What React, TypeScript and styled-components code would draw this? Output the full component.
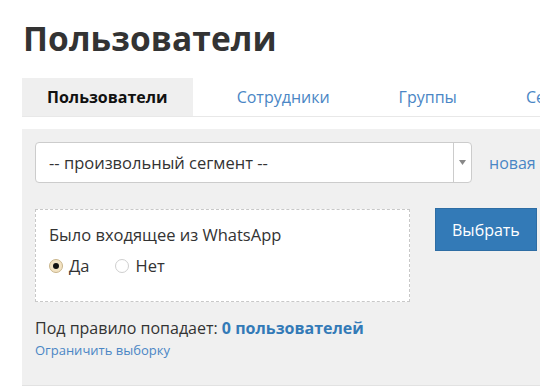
import React from 'react';
import styled, { createGlobalStyle } from 'styled-components';

const GlobalStyle = createGlobalStyle`
  html, body {
    margin: 0;
    padding: 0;
    background: #ffffff;
    overflow: hidden;
  }
  body {
    font-family: "Open Sans", "Liberation Sans", sans-serif;
    color: #333333;
  }
`;

const Page = styled.div`
  width: 720px;
  padding: 14px 0 0 22px;
`;

const Title = styled.h1`
  margin: 0 0 16px 1px;
  font-family: "Open Sans", sans-serif;
  font-size: 33.5px;
  line-height: 48px;
  font-weight: 700;
  color: #333333;
  letter-spacing: 0.1px;
`;

const Tabs = styled.div`
  display: flex;
  gap: 19px;
  height: 38px;
  border-bottom: 1px solid #e8e8e8;
`;

const Tab = styled.div<{ $active?: boolean }>`
  display: flex;
  align-items: center;
  padding: 0 25px;
  font-size: 16px;
  font-weight: ${({ $active }) => ($active ? 700 : 400)};
  color: ${({ $active }) => ($active ? '#111111' : '#4a86c5')};
  background: ${({ $active }) => ($active ? '#efefef' : 'transparent')};
  white-space: nowrap;
`;

const Panel = styled.div`
  margin-top: 12px;
  background: #f0f0f0;
  border-bottom: 1px solid #e2e2e2;
  padding: 13px 13px 27px 13px;
`;

const SelectRow = styled.div`
  display: flex;
  align-items: center;
  gap: 17px;
`;

const SelectBox = styled.div`
  display: flex;
  width: 437px;
  height: 41px;
  box-sizing: border-box;
  background: #ffffff;
  border: 1px solid #cccccc;
  border-radius: 4px;
`;

const SelectValue = styled.div`
  flex: 1;
  display: flex;
  align-items: center;
  padding-left: 13px;
  font-size: 16.5px;
  color: #333333;
`;

const SelectArrow = styled.div`
  width: 16px;
  display: flex;
  align-items: center;
  justify-content: center;
  border-left: 1px solid #cccccc;
  padding-right: 1px;
`;

const Link = styled.a<{ $size?: number }>`
  color: #4a86c5;
  font-size: ${({ $size }) => $size ?? 16}px;
  text-decoration: none;
  white-space: nowrap;
`;

const RuleRow = styled.div`
  display: flex;
  align-items: flex-start;
  gap: 25px;
  margin-top: 26px;
`;

const RuleBox = styled.div`
  width: 375px;
  height: 93px;
  box-sizing: border-box;
  background: #ffffff;
  border: 1px dashed #c8c8c8;
  padding: 13px 13px;
`;

const RuleLabel = styled.div`
  font-size: 16.5px;
  line-height: 24px;
  color: #333333;
`;

const Radios = styled.div`
  display: flex;
  gap: 26px;
  margin-top: 7px;
`;

const RadioOption = styled.label`
  display: flex;
  align-items: center;
  gap: 6px;
  font-size: 16.5px;
  color: #333333;
`;

const RadioCircle = styled.span<{ $checked?: boolean }>`
  width: 14px;
  height: 14px;
  box-sizing: border-box;
  border-radius: 50%;
  border: 1px solid ${({ $checked }) => ($checked ? '#c9b58c' : '#cfcfcf')};
  background: ${({ $checked }) => ($checked ? '#f3e3c3' : '#ffffff')};
  display: flex;
  align-items: center;
  justify-content: center;
  &::after {
    content: '';
    width: 6px;
    height: 6px;
    border-radius: 50%;
    background: ${({ $checked }) => ($checked ? '#111111' : 'transparent')};
  }
`;

const Buttons = styled.div`
  display: flex;
  gap: 4px;
  margin-top: -1px;
`;

const Button = styled.button<{ $variant: 'primary' | 'success' }>`
  height: 43px;
  padding: 0 16px;
  font-family: inherit;
  font-size: 16px;
  color: #ffffff;
  border-radius: 0;
  border: 1px solid ${({ $variant }) => ($variant === 'primary' ? '#2e6da4' : '#4cae4c')};
  background: ${({ $variant }) => ($variant === 'primary' ? '#337ab7' : '#5cb85c')};
  white-space: nowrap;
`;

const Summary = styled.div`
  margin-top: 15px;
  font-size: 16px;
  line-height: 22px;
  color: #333333;
`;

const Count = styled.span`
  font-weight: 700;
  color: #337ab7;
`;

const SubLink = styled.div`
  margin-top: 2px;
  line-height: 16px;
`;

export default function App() {
  return (
    <>
      <GlobalStyle />
      <Page>
        <Title>Пользователи</Title>
        <Tabs>
          <Tab $active>Пользователи</Tab>
          <Tab>Сотрудники</Tab>
          <Tab>Группы</Tab>
          <Tab>Сегменты</Tab>
        </Tabs>
        <Panel>
          <SelectRow>
            <SelectBox>
              <SelectValue>-- произвольный сегмент --</SelectValue>
              <SelectArrow>
                <svg width="7" height="5" viewBox="0 0 7 5">
                  <path d="M0 0h7L3.5 5z" fill="#888888" />
                </svg>
              </SelectArrow>
            </SelectBox>
            <Link href="#">новая запись</Link>
          </SelectRow>
          <RuleRow>
            <RuleBox>
              <RuleLabel>Было входящее из WhatsApp</RuleLabel>
              <Radios>
                <RadioOption>
                  <RadioCircle $checked />
                  Да
                </RadioOption>
                <RadioOption>
                  <RadioCircle />
                  Нет
                </RadioOption>
              </Radios>
            </RuleBox>
            <Buttons>
              <Button $variant="primary">Выбрать</Button>
              <Button $variant="success">Сохранить</Button>
            </Buttons>
          </RuleRow>
          <Summary>
            Под правило попадает: <Count>0 пользователей</Count>
          </Summary>
          <SubLink>
            <Link href="#" $size={13}>Ограничить выборку</Link>
          </SubLink>
        </Panel>
      </Page>
    </>
  );
}
